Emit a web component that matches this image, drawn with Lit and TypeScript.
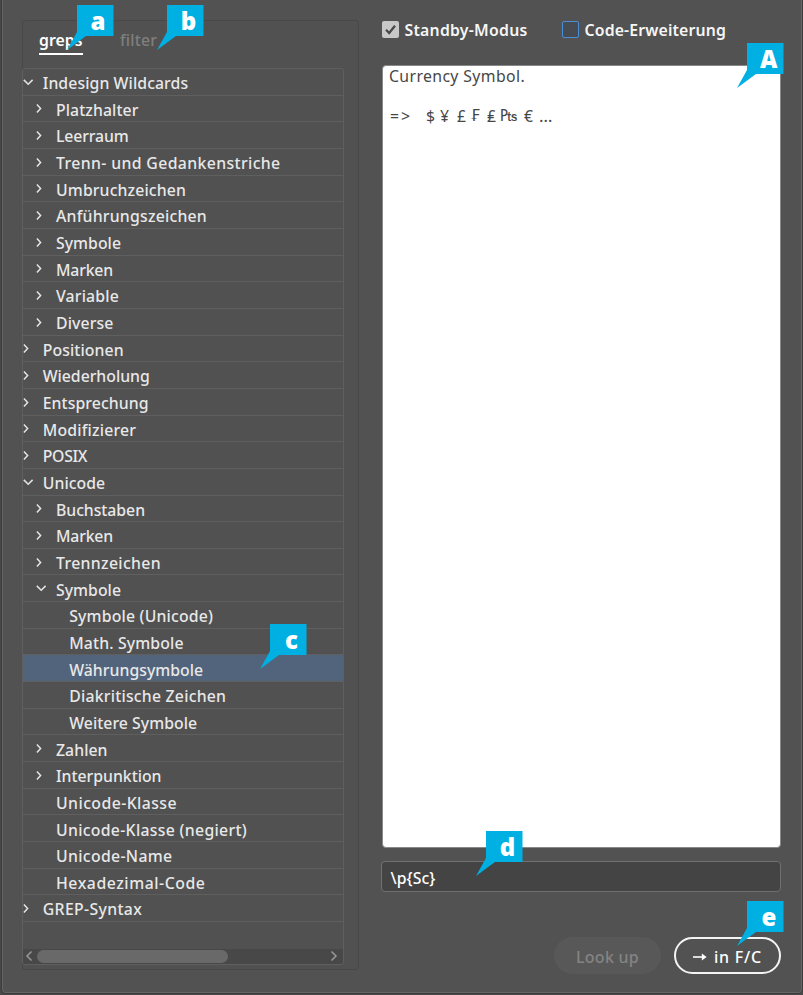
import { LitElement, html, css, svg } from "lit";
import { customElement, property } from "lit/decorators.js";
import { classMap } from "lit/directives/class-map.js";

type State = "open" | "closed" | "leaf";
interface Row { label: string; level: number; state: State; width: number; selected?: boolean; }

const row = (label: string, level: number, state: State, width: number, selected = false): Row =>
  ({ label, level, state, width, selected });

const ROWS: Row[] = [
  row("Indesign Wildcards", 0, "open", 145.5),
  row("Platzhalter", 1, "closed", 82.5),
  row("Leerraum", 1, "closed", 72.5),
  row("Trenn- und Gedankenstriche", 1, "closed", 224.5),
  row("Umbruchzeichen", 1, "closed", 130),
  row("Anführungszeichen", 1, "closed", 151),
  row("Symbole", 1, "closed", 65),
  row("Marken", 1, "closed", 57),
  row("Variable", 1, "closed", 63),
  row("Diverse", 1, "closed", 57.5),
  row("Positionen", 0, "closed", 81),
  row("Wiederholung", 0, "closed", 107),
  row("Entsprechung", 0, "closed", 106),
  row("Modifizierer", 0, "closed", 93.5),
  row("POSIX", 0, "closed", 44.5),
  row("Unicode", 0, "open", 62.5),
  row("Buchstaben", 1, "closed", 89),
  row("Marken", 1, "closed", 57),
  row("Trennzeichen", 1, "closed", 105),
  row("Symbole", 1, "open", 65),
  row("Symbole (Unicode)", 2, "leaf", 144),
  row("Math. Symbole", 2, "leaf", 114.5),
  row("Währungsymbole", 2, "leaf", 134, true),
  row("Diakritische Zeichen", 2, "leaf", 157),
  row("Weitere Symbole", 2, "leaf", 128),
  row("Zahlen", 1, "closed", 51.5),
  row("Interpunktion", 1, "closed", 105.5),
  row("Unicode-Klasse", 1, "leaf", 121),
  row("Unicode-Klasse (negiert)", 1, "leaf", 191),
  row("Unicode-Name", 1, "leaf", 116.5),
  row("Hexadezimal-Code", 1, "leaf", 149.5),
  row("GREP-Syntax", 0, "closed", 99.5),
];

/* A label whose tracking is adjusted so that it fills the given width. */
@customElement("tracked-label")
class TrackedLabel extends LitElement {
  @property() text = "";
  @property({ type: Number }) width = 0;

  static styles = css`
    :host { display: inline-block; white-space: pre; }
    .label { display: inline-block; }
  `;

  firstUpdated() {
    const el = this.renderRoot.querySelector<HTMLElement>(".label")!;
    const natural = el.getBoundingClientRect().width;
    el.style.letterSpacing = `${(this.width - natural) / this.text.length}px`;
  }

  render() { return html`<span class="label">${this.text}</span>`; }
}

/* Cyan marker flag with a pointer towards the lower left. */
@customElement("callout-flag")
class CalloutFlag extends LitElement {
  @property() letter = "";

  static styles = css`
    :host { display: block; position: absolute; width: 47px; height: 46px; }
    .shape { position: absolute; inset: 0; fill: #00b0e3; }
    .letter {
      position: absolute; left: 17px; top: 0; width: 29px; height: 31px;
      font: 800 24px/31px "Open Sans", "Noto Sans", sans-serif; color: #fff; text-align: center;
    }
  `;

  render() {
    return html`
      <svg class="shape" width="47" height="46" viewBox="0 0 47 46"><path d="M10 0H46.5V31H19L0 45L10 27Z" /></svg>
      <span class="letter">${this.letter}</span>`;
  }
}

const chevronDown = svg`<path d="M0.8 3.9L5.2 8.3L9.6 3.9" />`;
const chevronRight = svg`<path d="M0.9 2.4L4.6 6.4L0.9 10.4" />`;

@customElement("app-root")
class AppRoot extends LitElement {
  static styles = css`
    :host {
      display: block; position: relative; box-sizing: border-box; width: 803px; height: 995px;
      overflow: hidden; background: #484848;
      font: 500 15.8px/26px "Noto Sans", "Open Sans", sans-serif; color: #e8e8e8;
    }
    * { box-sizing: border-box; }
    .window {
      display: flex; width: 800px; height: 993px; margin-left: 2px; padding: 20px 19px 0 19px;
      background: #525252; border: 1px solid #646464; border-top: 0; border-radius: 0 0 4px 4px;
      box-shadow: 0 0 0 1px #3c3c3c;
    }
    .group {
      width: 337px; height: 950px; border: 1px solid #484848; border-radius: 3px;
      flex: none; display: flex; flex-direction: column; background: #515151;
    }
    .tabs { display: flex; height: 48px; padding: 6px 0 0 16px; gap: 37px; flex: none; }
    .tab { height: 27.5px; color: #7f7f7f; }
    .tab.active { color: #fff; font-weight: 600; border-bottom: 2.5px solid #fff; width: 44px; }
    .tree {
      width: 322px; height: 896.5px; margin-left: -1px; border: 1px solid #5f5f5f; border-radius: 3px;
      display: flex; flex-direction: column; overflow: hidden; margin-top: -1px;
    }
    .row {
      height: 26.667px; flex: none; border-bottom: 1px solid #5f5f5f; display: flex; align-items: center;
    }
    .row.level-1 { padding-left: 13.3px; }
    .row.level-2 { padding-left: 26.5px; }
    .row.selected { background: #52647c; }
    .twisty { width: 20px; height: 12px; flex: none; display: flex; }
    .twisty svg { fill: none; stroke: #e4e4e4; stroke-width: 1.5; margin-left: -0.5px; flex: none; }
    .text { height: 26px; }
    .row .text { position: relative; top: 1.3px; left: -0.3px; }
    .scroll {
      margin-top: auto; height: 15px; background: #484848; display: flex; align-items: center;
      padding: 0 5px 0 2px; flex: none;
    }
    .scroll svg { fill: none; stroke: #989898; stroke-width: 1.5; }
    .thumb { width: 191px; height: 13px; border-radius: 7px; background: #696969; margin: 0 auto 0 4px; }
    .side { margin-left: 22px; width: 402px; flex: none; padding-left: 1px; }
    .checks { display: flex; height: 45px; }
    .check { display: flex; height: 19px; align-items: center; gap: 6px; font-weight: 600; color: #f6f6f6; }
    .check + .check { margin-left: 34.5px; }
    .box { width: 16.5px; height: 16.5px; border-radius: 2px; flex: none; }
    .box.on { background: #c8c8c8; }
    .box.off { border: 1.5px solid #4a8fd8; background: #474c52; }
    .tick { display: block; fill: none; stroke: #484848; stroke-width: 2.2; }
    .preview {
      width: 399px; height: 783px; border: 1px solid #888; border-radius: 4px; background: #fff;
      color: #474747; padding: 0 6px; font-weight: 400; line-height: 20px;
    }
    .line { height: 20px; margin-top: -0.5px; }
    .glyphs { display: grid; grid-template-columns: 36px 14px 17px 13.5px 16.5px 13px 24px 15px auto; margin-top: 20px; margin-left: 1px; }
    .franc { font: 15px/20px "DejaVu Sans", sans-serif; }
    .peseta { font: 16px/20px "Liberation Sans", sans-serif; }
    .dots { font-size: 17px; }
    .code {
      width: 400px; height: 31px; margin: 13px 0 0 -1px; border: 1px solid #707070; border-radius: 4px;
      background: #444; color: #fff; padding: 3px 0 0 8.5px;
    }
    .actions { display: flex; justify-content: flex-end; gap: 13px; margin-top: 45px; width: 399px; }
    .button {
      height: 37px; width: 107px; border-radius: 19px; display: flex; align-items: center; justify-content: center;
      font-size: 16px; padding-top: 2px;
    }
    .button.muted { background: #585858; color: #848484; }
    .button.primary { border: 2px solid #f4f4f4; color: #fff; }
    .arrow { width: 14px; height: 10px; margin-right: 7px; fill: none; stroke: #fff; stroke-width: 1.6; }
    .arrow .head { fill: #fff; stroke: none; }
    .flag-a { left: 66.5px; top: 5px; }
    .flag-b { left: 157px; top: 5px; }
    .flag-c { left: 260px; top: 624px; }
    .flag-big { left: 737.3px; top: 43px; }
    .flag-d { left: 476px; top: 831px; }
    .flag-e { left: 737.3px; top: 901px; }
  `;

  private label(text: string, width: number) {
    return html`<tracked-label class="text" .text=${text} .width=${width}></tracked-label>`;
  }

  private renderRow(r: Row) {
    const classes = { row: true, [`level-${r.level}`]: true, [r.state]: true, selected: !!r.selected };
    return html`
      <div class=${classMap(classes)}>
        <span class="twisty">
          ${r.state === "leaf" ? "" : html`<svg width="12" height="12" viewBox="0 0 12 12">${r.state === "open" ? chevronDown : chevronRight}</svg>`}
        </span>
        ${this.label(r.label, r.width)}
      </div>`;
  }

  render() {
    return html`
      <div class="window">
        <div class="group">
          <div class="tabs">
            <div class="tab active">${this.label("greps", 43.5)}</div>
            <div class="tab">${this.label("filter", 37)}</div>
          </div>
          <div class="tree">
            ${ROWS.map((r) => this.renderRow(r))}
            <div class="scroll">
              <svg width="8" height="12" viewBox="0 0 8 12"><path d="M6.5 1.5L2 6L6.5 10.5" /></svg>
              <div class="thumb"></div>
              <svg width="8" height="12" viewBox="0 0 8 12"><path d="M1.5 1.5L6 6L1.5 10.5" /></svg>
            </div>
          </div>
        </div>
        <div class="side">
          <div class="checks">
            <div class="check">
              <span class="box on"><svg class="tick" width="17" height="17" viewBox="0 0 17 17"><path d="M4 8.8L7.2 12L13 4.8" /></svg></span>
              ${this.label("Standby-Modus", 123)}
            </div>
            <div class="check"><span class="box off"></span>${this.label("Code-Erweiterung", 141.5)}</div>
          </div>
          <div class="preview">
            <div class="line">${this.label("Currency Symbol.", 136)}</div>
            <div class="line glyphs">
              ${this.label("=>", 22)}<span>$</span><span>¥</span><span>£</span><span class="franc">₣</span><span>₤</span><span class="peseta">₧</span><span>€</span><span class="dots">…</span>
            </div>
          </div>
          <div class="code">${this.label("\\p{Sc}", 45)}</div>
          <div class="actions">
            <div class="button muted">${this.label("Look up", 63)}</div>
            <div class="button primary">
              <svg class="arrow" viewBox="0 0 14 10"><path d="M0 5H10" /><path class="head" d="M8.8 1.6L13.6 5L8.8 8.4Z" /></svg>
              ${this.label("in F/C", 48)}
            </div>
          </div>
        </div>
      </div>
      <callout-flag class="flag-a" letter="a"></callout-flag>
      <callout-flag class="flag-b" letter="b"></callout-flag>
      <callout-flag class="flag-c" letter="c"></callout-flag>
      <callout-flag class="flag-big" letter="A"></callout-flag>
      <callout-flag class="flag-d" letter="d"></callout-flag>
      <callout-flag class="flag-e" letter="e"></callout-flag>`;
  }
}
